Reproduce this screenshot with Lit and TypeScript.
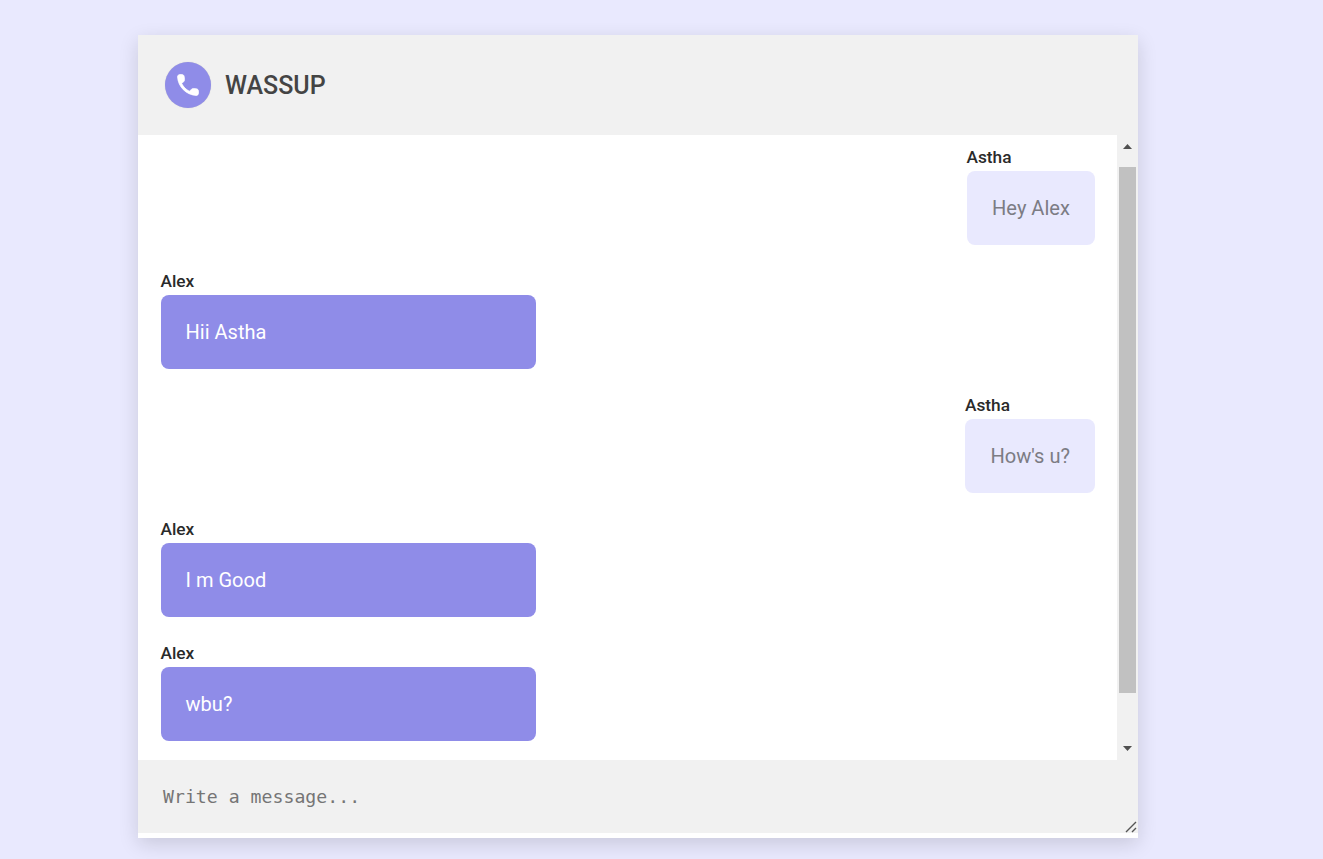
import { LitElement, html, css, svg } from "lit";
import { customElement } from "lit/decorators.js";

const messages = [
  { who: "Astha", text: "Hey Alex", mine: true },
  { who: "Alex", text: "Hii Astha", mine: false },
  { who: "Astha", text: "How's u?", mine: true },
  { who: "Alex", text: "I m Good", mine: false },
  { who: "Alex", text: "wbu?", mine: false },
];

@customElement("app-root")
export class AppRoot extends LitElement {
  static styles = css`
    :host {
      display: block;
      height: 859px;
      overflow: hidden;
      background: #e9e9fe;
      font-family: Roboto, sans-serif;
    }
    .page {
      display: flex;
      padding: 35px 0 0 138px;
    }
    .card {
      width: 1000px;
      height: 803px;
      display: flex;
      flex-direction: column;
      background: #fff;
      border-radius: 3px 3px 0 0;
      box-shadow: 0 6px 20px rgba(0, 0, 0, 0.14);
    }
    .head {
      height: 100px;
      flex: none;
      display: flex;
      align-items: center;
      gap: 14px;
      padding-left: 27px;
      background: #f1f1f1;
    }
    .logo {
      width: 46px;
      height: 46px;
      border-radius: 50%;
      background: #8f8ce8;
      box-shadow: 0 0 1px rgba(0, 0, 0, 0.2);
      display: flex;
      align-items: center;
      justify-content: center;
    }
    .logo svg {
      width: 28px;
      height: 28px;
      fill: #fff;
      stroke: #fff;
      stroke-width: 0.6;
    }
    .title {
      font-size: 25px;
      font-weight: 500;
      color: #444;
    }
    .mid {
      height: 625px;
      flex: none;
      display: flex;
    }
    .chat {
      flex: 1;
      display: flex;
      flex-direction: column;
      gap: 26px;
      padding: 12px 22px 0 23px;
      overflow: hidden;
    }
    .msg {
      display: flex;
      flex-direction: column;
      align-items: flex-start;
    }
    .msg.mine {
      align-self: flex-end;
    }
    .who {
      font-size: 17.3px;
      font-weight: 500;
      line-height: 20px;
      margin: 0 0 4px -0.5px;
      color: #2a2a2a;
    }
    .bubble {
      box-sizing: border-box;
      height: 74px;
      display: flex;
      align-items: center;
      padding: 0 25px 0 24.6px;
      border-radius: 8px;
      font-size: 20px;
      background: #8f8ce8;
      color: #fff;
      width: 375px;
    }
    .mine .bubble {
      width: auto;
      padding: 0 25px;
      font-size: 20.1px;
      background: #e9e9fe;
      color: #7c7c84;
    }
    .bar {
      width: 21px;
      flex: none;
      display: flex;
      flex-direction: column;
      align-items: center;
      background: #f1f1f1;
    }
    .arrow {
      height: 32px;
      flex: none;
      box-sizing: border-box;
      padding-top: 9px;
      line-height: 0;
    }
    .arrow svg {
      width: 9px;
      height: 5px;
      fill: #505050;
    }
    .thumb {
      width: 17px;
      flex: 1;
      background: #c1c1c1;
    }
    .arrow.down {
      height: 67px;
      padding-top: 53px;
    }
    .input {
      position: relative;
      height: 73px;
      flex: none;
      background: #f1f1f1;
      display: flex;
      align-items: center;
      padding-left: 25px;
      font-family: "DejaVu Sans Mono", monospace;
      font-size: 18.2px;
      color: #757575;
    }
    .grip {
      position: absolute;
      right: 0;
      bottom: 0;
      width: 13px;
      height: 12px;
      stroke: #555;
      stroke-width: 1.4;
    }
  `;

  render() {
    return html`
      <div class="page">
        <div class="card">
          <div class="head">
            <div class="logo">
              <svg viewBox="0 0 24 24">
                ${svg`<path d="M19.23 15.26l-2.54-.29c-.61-.07-1.21.14-1.64.57l-1.84 1.84c-2.83-1.44-5.15-3.75-6.59-6.59l1.85-1.85c.43-.43.64-1.03.57-1.64l-.29-2.52c-.12-1.01-.97-1.77-1.99-1.77H5.03c-1.13 0-2.07.94-2 2.07.53 8.54 7.36 15.36 15.89 15.89 1.13.07 2.07-.87 2.07-2v-1.73c.01-1.01-.75-1.86-1.76-1.98z"/>`}
              </svg>
            </div>
            <div class="title">WASSUP</div>
          </div>
          <div class="mid">
            <div class="chat">
              ${messages.map(
                (m) => html`
                  <div class="msg ${m.mine ? "mine" : ""}">
                    <div class="who">${m.who}</div>
                    <div class="bubble">${m.text}</div>
                  </div>
                `
              )}
            </div>
            <div class="bar">
              <div class="arrow"><svg viewBox="0 0 9 5"><path d="M4.5 0L9 5H0z" /></svg></div>
              <div class="thumb"></div>
              <div class="arrow down"><svg viewBox="0 0 9 5"><path d="M0 0H9L4.5 5z" /></svg></div>
            </div>
          </div>
          <div class="input">
            Write a message...
            <svg class="grip" viewBox="0 0 13 12"><path d="M1 11L11 1M7 11L11 7" /></svg>
          </div>
        </div>
      </div>
    `;
  }
}
